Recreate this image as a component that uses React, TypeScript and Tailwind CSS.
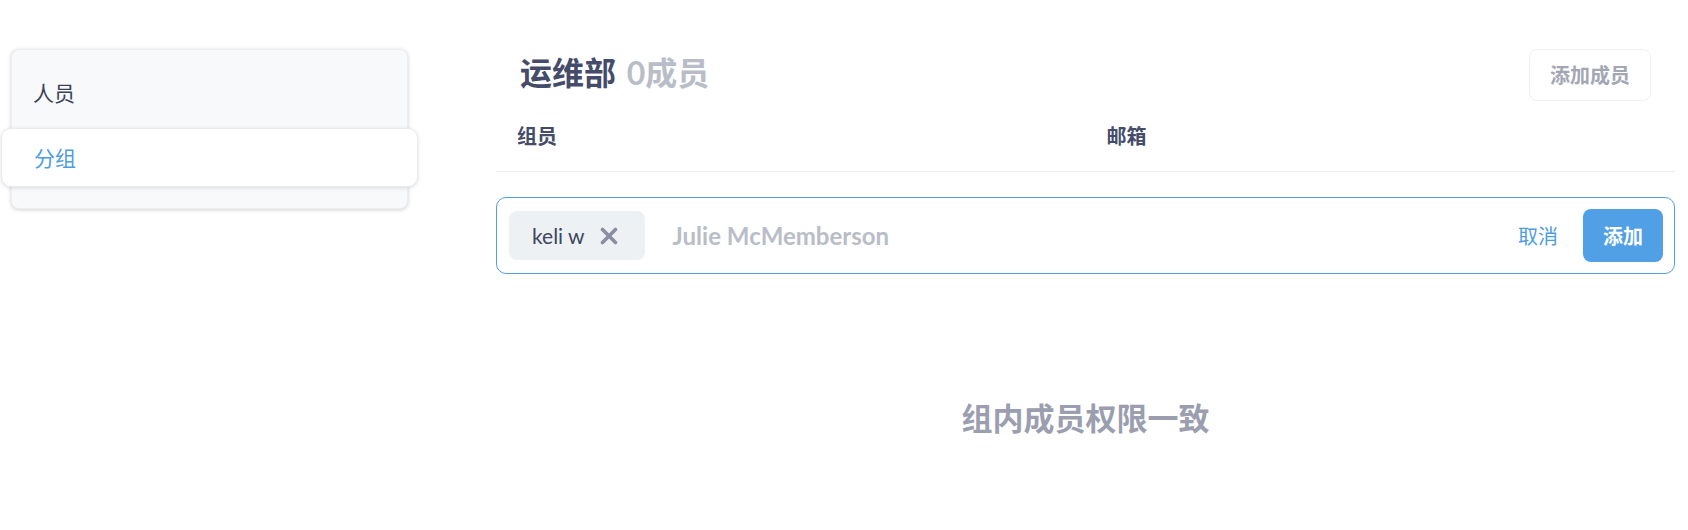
const font = { fontFamily: 'Lato, "Noto Sans CJK SC", sans-serif' }

function Sidebar() {
	return (
		<div className="ml-[11px] w-[397px] h-[160px] rounded-lg bg-[#f8f9fb] shadow-[0_1px_4px_rgba(0,0,0,0.18)] border border-[#eceef2] pt-[13px]">
			<div className="h-[60px] flex items-center pl-[21px] text-[21px] text-[#3b4258]">人员</div>
			<div className="mt-[5px] -mx-[11px] h-[59px] flex items-center pl-[32px] rounded-[10px] bg-white border border-[#e9ebef] shadow-[0_1px_4px_rgba(0,0,0,0.12)] text-[21px] text-[#4d9de0]">
				分组
			</div>
		</div>
	)
}

export default function App() {
	return (
		<div className="flex pt-[49px] bg-white min-h-[530px]" style={font}>
			<Sidebar />
			<div className="ml-[88px] w-[1179px]">
				<div className="flex items-start justify-between">
					<h1 className="pl-[24px] pt-[5px] text-[32px] font-bold leading-[38px] text-[#454c6a]">
						运维部 <span className="ml-[3px] text-[#b9bdc7]">0成员</span>
					</h1>
					<button className="mr-[24px] h-[52px] w-[122px] rounded-lg border border-[#eef0f3] text-[20px] font-bold text-[#a3a7b4]">
						添加成员
					</button>
				</div>
				<div className="grid grid-cols-2 h-[71px] items-center border-b border-[#eceef1] text-[20px] font-bold text-[#454c6a]">
					<div className="-mt-[1px] pl-[21px]">组员</div>
					<div className="-mt-[1px] pl-[21px]">邮箱</div>
				</div>
				<div className="mt-[25px] h-[77px] rounded-[10px] border border-[#529ee0] flex items-center pl-[12px] pr-[11px]">
					<div className="h-[49px] flex items-center gap-[15px] rounded-lg bg-[#edf1f4] pl-[23px] pr-[27px] text-[21px] text-[#3d4560]">
						<span>keli w</span>
						<svg width="18" height="18" viewBox="0 0 18 18" className="text-[#8a8fa0]">
							<path d="M2.5 2.5 L15.5 15.5 M15.5 2.5 L2.5 15.5" stroke="currentColor" strokeWidth="3.6" strokeLinecap="round" />
						</svg>
					</div>
					<span className="ml-[28px] text-[24px] font-bold text-[#b9bdc7]">Julie McMemberson</span>
					<span className="ml-auto mr-[25px] text-[20px] text-[#4d9de0]">取消</span>
					<button className="h-[53px] w-[80px] rounded-lg bg-[#51a0e5] text-[20px] font-bold text-white">添加</button>
				</div>
				<div className="mt-[121px] text-center text-[31px] font-bold text-[#9a9eae]">组内成员权限一致</div>
			</div>
		</div>
	)
}
